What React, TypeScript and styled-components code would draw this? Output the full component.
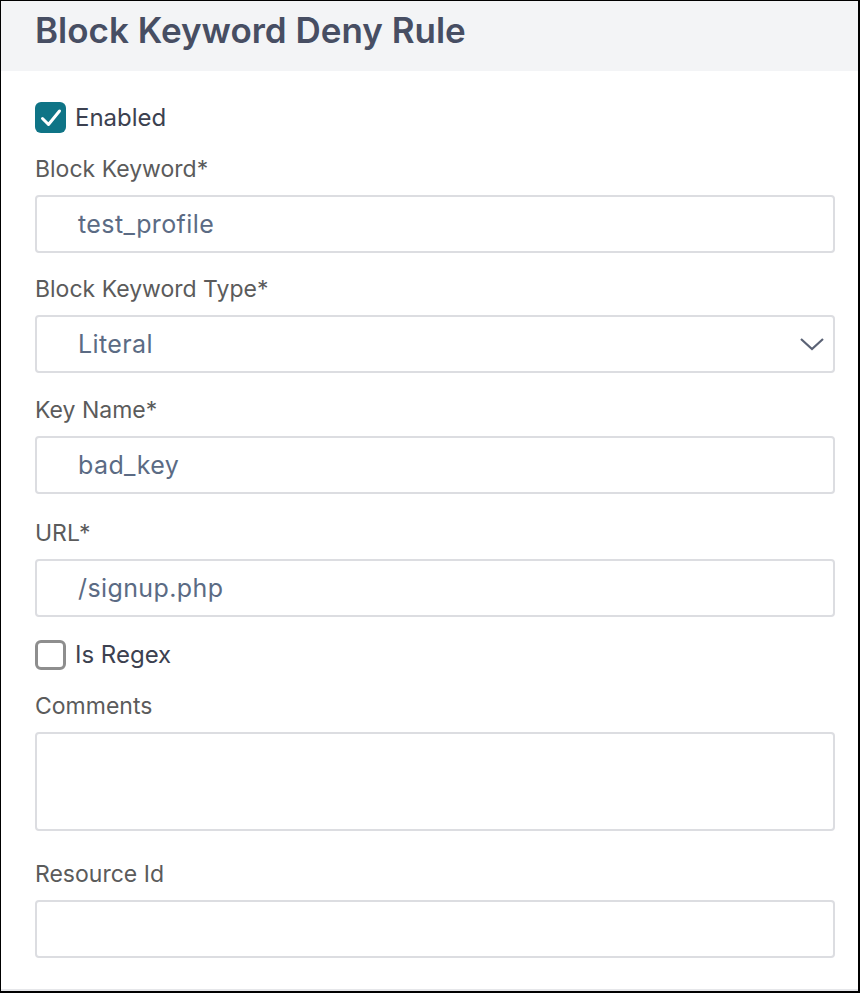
import React from "react";
import styled, { createGlobalStyle } from "styled-components";

const Global = createGlobalStyle`
  html, body { margin: 0; padding: 0; background: #ffffff; }
  body { font-family: "Inter", "Roboto", "Liberation Sans", sans-serif; }
  * { box-sizing: border-box; }
`;

const Frame = styled.div`
  width: 860px;
  height: 993px;
  border: 1px solid #000;
  border-right-width: 2px;
  border-bottom-width: 2px;
  background: #fff;
  display: flex;
  flex-direction: column;
  overflow: hidden;
`;

const Header = styled.div`
  height: 70px;
  background: #f3f4f6;
  display: flex;
  align-items: center;
  padding: 0 34px 13px;
  flex-shrink: 0;
`;

const Title = styled.h1`
  margin: 0;
  font-size: 35px;
  line-height: 40px;
  font-weight: 600;
  color: #474e63;
`;

const Body = styled.div`
  flex: 1;
  display: flex;
  flex-direction: column;
  padding: 31px 24px 0 34px;
  border-bottom: 2px solid #e6e7ea;
`;

const CheckRow = styled.label<{ $mb?: number }>`
  display: flex;
  align-items: center;
  gap: 9px;
  margin-bottom: ${(p) => p.$mb ?? 0}px;
  font-size: 24px;
  color: #3c4150;
  height: 31px;
`;

const Box = styled.span<{ $checked?: boolean }>`
  width: 31px;
  height: ${(p) => (p.$checked ? 31 : 30)}px;
  border-radius: 6px;
  display: inline-flex;
  align-items: center;
  justify-content: center;
  background: ${(p) => (p.$checked ? "#0f7486" : "#fff")};
  border: ${(p) => (p.$checked ? "none" : "3px solid #8e8e8e")};
  flex-shrink: 0;
`;

const Field = styled.div<{ $mb?: number }>`
  display: flex;
  flex-direction: column;
  margin-bottom: ${(p) => p.$mb ?? 22}px;
`;

const Label = styled.div`
  font-size: 23px;
  line-height: 28px;
  height: 28px;
  color: #5b5b5b;
  margin-bottom: 12px;
`;

const InputBox = styled.div<{ $h?: number }>`
  height: ${(p) => p.$h ?? 58}px;
  min-height: ${(p) => p.$h ?? 58}px;
  width: 800px;
  border: 2px solid #dcdde1;
  border-radius: 4px;
  display: flex;
  align-items: center;
  justify-content: space-between;
  padding: 0 8px 0 41px;
  font-size: 25px;
  letter-spacing: 0.4px;
  color: #5b6b84;
`;

const Chevron = () => (
  <svg width="26" height="16" viewBox="0 0 26 16">
    <path d="M2 3 L13 13 L24 3" fill="none" stroke="#5a6275" strokeWidth="2.2" />
  </svg>
);

const Check = () => (
  <svg width="22" height="20" viewBox="0 0 22 20">
    <path d="M2.5 10.5 L8.5 16.5 L19.5 3" fill="none" stroke="#fff" strokeWidth="3" strokeLinecap="round" strokeLinejoin="round" />
  </svg>
);

export default function App() {
  return (
    <>
      <Global />
      <Frame>
        <Header>
          <Title>Block Keyword Deny Rule</Title>
        </Header>
        <Body>
          <CheckRow $mb={22}>
            <Box $checked>
              <Check />
            </Box>
            Enabled
          </CheckRow>
          <Field $mb={22}>
            <Label>Block Keyword*</Label>
            <InputBox>test_profile</InputBox>
          </Field>
          <Field $mb={23}>
            <Label>Block Keyword Type*</Label>
            <InputBox>
              Literal
              <Chevron />
            </InputBox>
          </Field>
          <Field $mb={25}>
            <Label>Key Name*</Label>
            <InputBox>bad_key</InputBox>
          </Field>
          <Field $mb={22}>
            <Label>URL*</Label>
            <InputBox>/signup.php</InputBox>
          </Field>
          <CheckRow $mb={22}>
            <Box />
            Is Regex
          </CheckRow>
          <Field $mb={29}>
            <Label>Comments</Label>
            <InputBox $h={99} />
          </Field>
          <Field>
            <Label>Resource Id</Label>
            <InputBox />
          </Field>
        </Body>
      </Frame>
    </>
  );
}
